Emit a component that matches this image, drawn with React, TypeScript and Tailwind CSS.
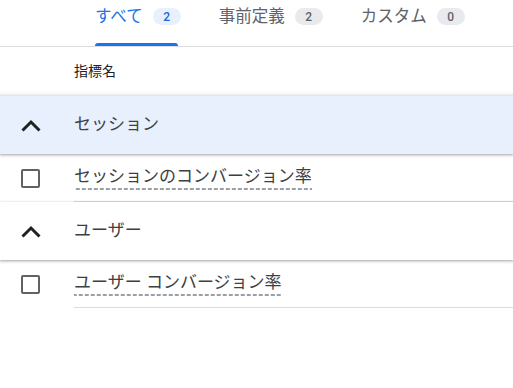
import React from "react";

const font = "font-['Roboto','Noto_Sans_CJK_JP',sans-serif]";

function Tab({ label, count, active }: { label: string; count: number; active?: boolean }) {
  return (
    <div className="relative h-[46px] flex items-start">
      <div className="h-[33px] flex items-center gap-[10px]">
        <span className={`text-[16.5px] leading-[20px] ${active ? "text-[#1a73e8]" : "text-[#5f6368]"}`}>{label}</span>
        <span
          className={`w-[28px] h-[17px] rounded-full flex items-center justify-center text-[12px] font-medium leading-none ${
            active ? "bg-[#e8f0fe] text-[#1967d2]" : "bg-[#e8eaed] text-[#5f6368]"
          }`}
        >
          {count}
        </span>
      </div>
      {active && <div className="absolute left-0 bottom-0 w-[83px] h-[3px] rounded-t-[3px] bg-[#1a73e8]" />}
    </div>
  );
}

function Chevron() {
  return (
    <svg width="20" height="13" viewBox="0 0 20 13" fill="none">
      <path d="M1.5 11.5 L10 3 L18.5 11.5" stroke="#202124" strokeWidth="3" />
    </svg>
  );
}

function GroupRow({ label, active }: { label: string; active?: boolean }) {
  return (
    <div
      className={`relative z-10 h-[58px] flex ${active ? "bg-[#e8f0fe]" : "bg-white"} shadow-[0_1px_2px_rgba(60,64,67,0.3),0_1px_3px_1px_rgba(60,64,67,0.15)]`}
    >
      <div className="w-[74px] flex items-center pl-[21px]">
        <Chevron />
      </div>
      <div className="flex-1 flex items-center text-[17px] text-[#3c4043]">{label}</div>
    </div>
  );
}

function ItemRow({ label }: { label: string }) {
  return (
    <div className="h-[48px] flex bg-white">
      <div className="w-[74px] flex items-center pl-[21px]">
        <div className="w-[19px] h-[19px] border-2 border-[#5f6368] rounded-[2px]" />
      </div>
      <div className="flex-1 flex items-center border-b border-[#dadce0]">
        <span className="text-[17px] leading-[20px] text-[#3c4043] pt-[1px] pb-[4px] bg-[linear-gradient(to_right,#9aa0a6_66%,transparent_66%)] bg-[length:6px_2px] bg-repeat-x bg-bottom">
          {label}
        </span>
      </div>
    </div>
  );
}

export default function App() {
  return (
    <div className={`w-[513px] h-[388px] bg-white overflow-hidden ${font}`}>
      <div className="h-[47px] border-b border-[#dadce0] flex pl-[95px] gap-[38px]">
        <Tab label="すべて" count={2} active />
        <Tab label="事前定義" count={2} />
        <Tab label="カスタム" count={0} />
      </div>
      <div className="h-[49px] flex items-center pl-[74px] text-[14px] text-[#202124] shadow-[inset_0_-6px_6px_-6px_rgba(60,64,67,0.15)]">指標名</div>
      <GroupRow label="セッション" active />
      <ItemRow label="セッションのコンバージョン率" />
      <GroupRow label="ユーザー" />
      <ItemRow label="ユーザー コンバージョン率" />
    </div>
  );
}
